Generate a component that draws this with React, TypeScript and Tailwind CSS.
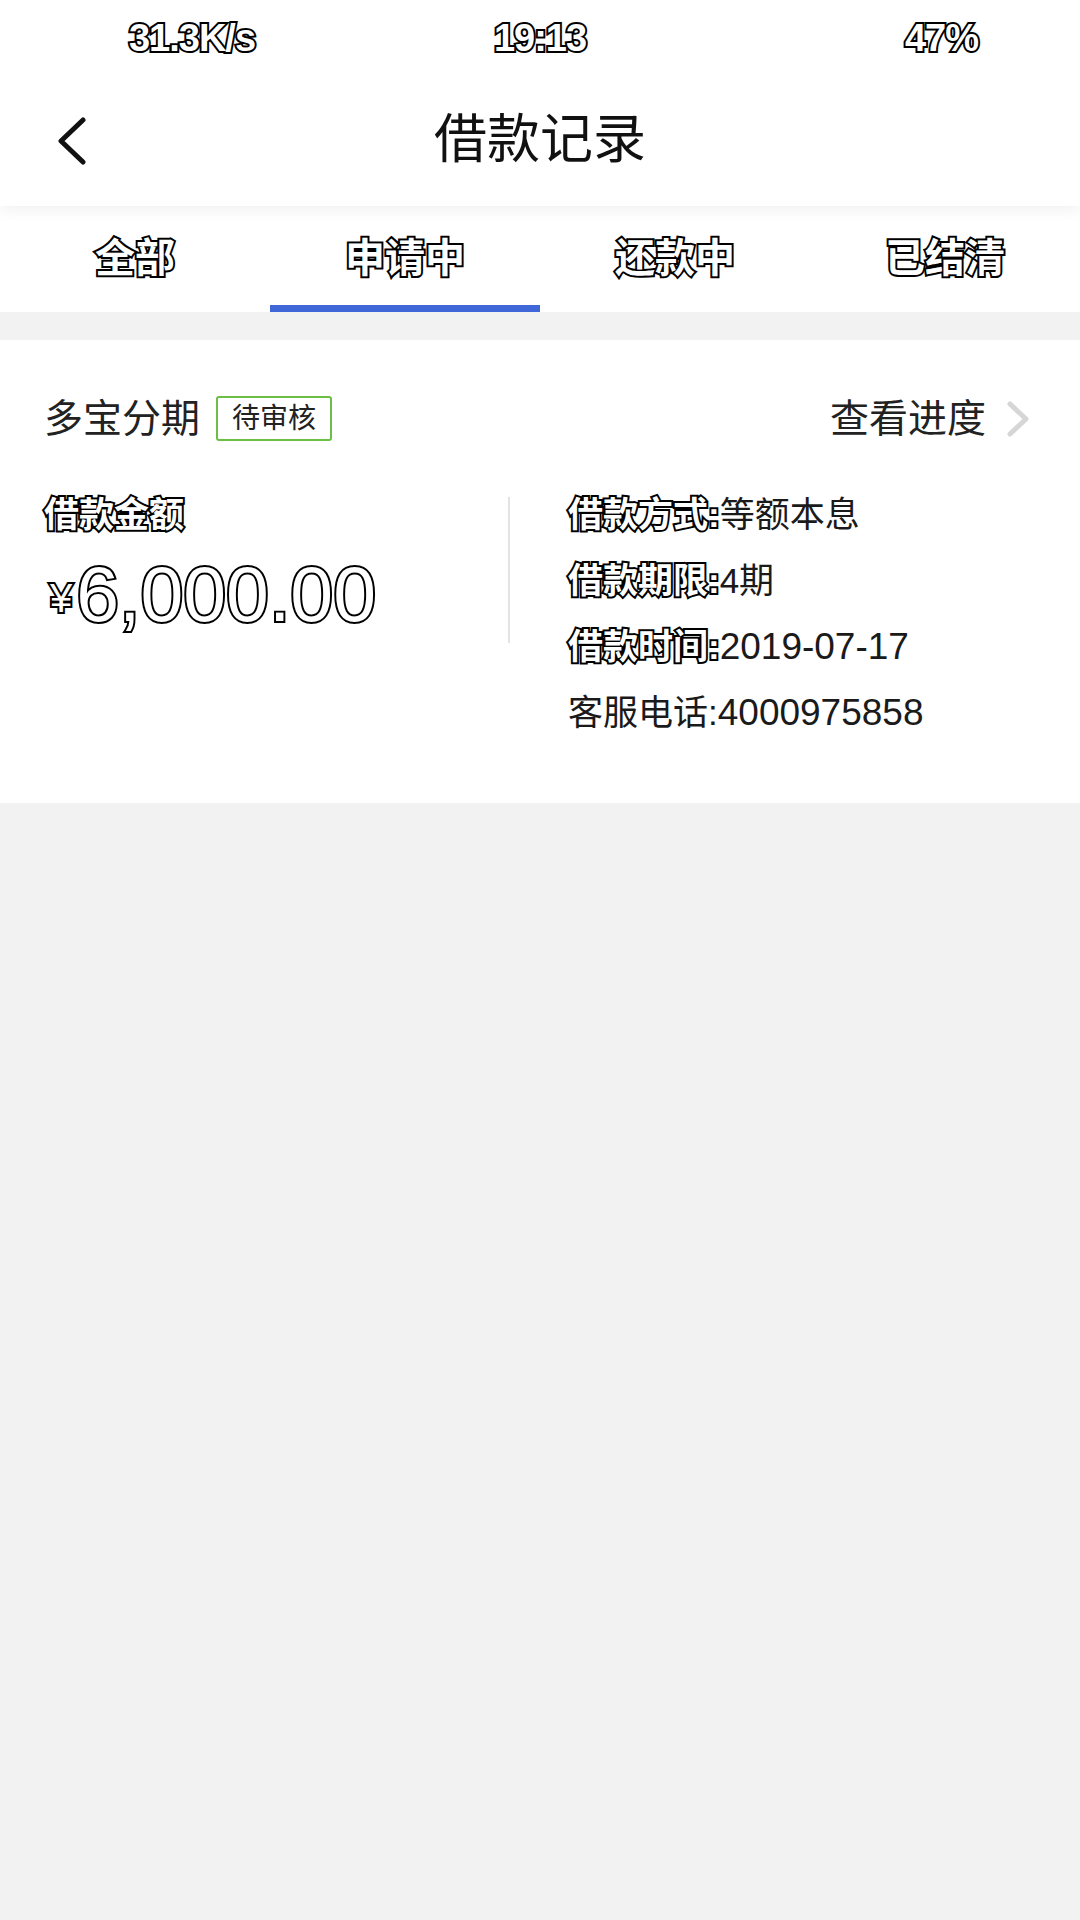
import React from 'react';

const outline = 'text-white [-webkit-text-stroke:4px_#000] [paint-order:stroke_fill]';

const tabs = ['全部', '申请中', '还款中', '已结清'];

const details = [
    { label: '借款方式:', value: '等额本息', strong: true, numeric: false },
    { label: '借款期限:', value: '4期', strong: true, numeric: false },
    { label: '借款时间:', value: '2019-07-17', strong: true, numeric: true },
    { label: '客服电话:', value: '4000975858', strong: false, numeric: true }
];

const App: React.FC = () => {
    const active = 1;

    return (
        <div className="w-[1080px] h-[1920px] bg-[#f2f2f2] font-['Liberation_Sans','Noto_Sans_CJK_SC',sans-serif] text-[#1a1a1a]">
            {/* Header */}
            <div className="relative z-10 bg-white shadow-[0_4px_14px_rgba(0,0,0,0.06)]">
                <div className="h-[76px] flex items-center font-bold text-[38px] tracking-[-1px] leading-none">
                    <div className={`w-[384px] text-center ${outline}`}>31.3K/s</div>
                    <div className={`w-[312px] text-center ${outline}`}>19:13</div>
                    <div className={`flex-1 text-right pr-[102px] ${outline}`}>47%</div>
                </div>
                <div className="h-[130px] grid grid-cols-[1fr_auto_1fr] items-center">
                    <div className="pl-[58px] flex items-center">
                        <svg width="28" height="48" viewBox="0 0 28 48" fill="none">
                            <polyline points="25,3 3,24 25,45" stroke="#111" strokeWidth="5" strokeLinecap="round" strokeLinejoin="round" />
                        </svg>
                    </div>
                    <h1 className="text-[53px] font-normal text-[#111] leading-none pb-[4px]">借款记录</h1>
                    <div />
                </div>
            </div>

            {/* Tabs */}
            <div className="bg-white grid grid-cols-4 h-[106px]">
                {tabs.map((tab, i) => (
                    <div
                        key={tab}
                        className={`flex items-center justify-center pt-[5px] border-b-[7px] ${i === active ? 'border-[#3f67d7]' : 'border-transparent'}`}
                    >
                        <span className={`text-[40px] font-bold leading-none ${outline}`}>{tab}</span>
                    </div>
                ))}
            </div>

            {/* Card */}
            <div className="mt-[28px] bg-white pt-[56px] pb-[57px] pl-[44px] pr-[50px]">
                <div className="h-[45px] flex items-center justify-between">
                    <div className="flex items-center">
                        <span className="text-[39px] leading-none text-[#222]">多宝分期</span>
                        <span className="ml-[16px] h-[45px] flex items-center px-[14px] border-2 border-[#6cbf45] rounded-[3px] text-[28px] leading-none text-[#222]">
                            待审核
                        </span>
                    </div>
                    <div className="flex items-center">
                        <span className="text-[39px] leading-none text-[#222]">查看进度</span>
                        <svg className="ml-[20px]" width="24" height="38" viewBox="0 0 24 38" fill="none">
                            <polyline points="4,4 20,19 4,34" stroke="#d6d6d6" strokeWidth="5" strokeLinecap="round" strokeLinejoin="round" />
                        </svg>
                    </div>
                </div>

                <div className="mt-[41px] flex">
                    <div className="w-[464px]">
                        <div className={`text-[35px] font-bold leading-[66px] ${outline}`}>借款金额</div>
                        <div className="mt-[8px] pl-[6px] flex items-end">
                            <span className={`text-[40px] leading-none mb-[15px] ${outline}`}>¥</span>
                            <span className={`ml-[4px] text-[77px] leading-none ${outline}`}>6,000.00</span>
                        </div>
                    </div>
                    <div className="w-[2px] h-[146px] mt-[15px] bg-[#e3e3e3]" />
                    <div className="pl-[58px]">
                        {details.map(d => (
                            <div key={d.label} className="text-[35px] leading-[66px] text-[#1a1a1a] whitespace-nowrap">
                                {d.strong ? (
                                    <span className={`font-bold ${outline}`}>{d.label}</span>
                                ) : (
                                    <span>{d.label}</span>
                                )}
                                <span className={d.numeric ? 'text-[37px]' : ''}>{d.value}</span>
                            </div>
                        ))}
                    </div>
                </div>
            </div>
        </div>
    );
};

export default App;
